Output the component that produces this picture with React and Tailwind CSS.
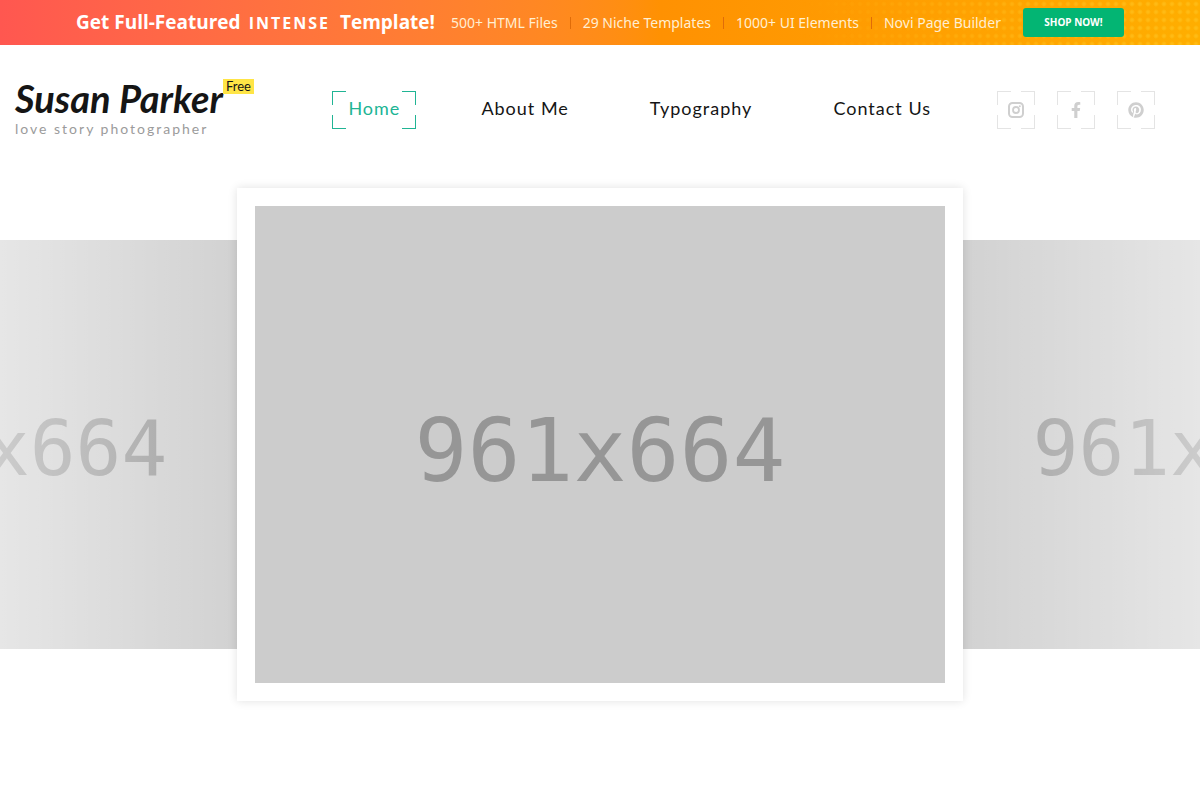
import { FaFacebookF, FaPinterest } from "react-icons/fa";

const features = ["500+ HTML Files", "29 Niche Templates", "1000+ UI Elements", "Novi Page Builder"];
const links = ["Home", "About Me", "Typography", "Contact Us"];

function InstagramIcon({ className }) {
  return (
    <svg viewBox="0 0 16 16" fill="none" stroke="currentColor" className={className} aria-hidden="true">
      <rect x="1" y="1" width="14" height="14" rx="3.5" strokeWidth="2" />
      <circle cx="8" cy="8" r="3" strokeWidth="1.8" />
      <circle cx="11.8" cy="4.2" r="1" fill="currentColor" stroke="none" />
    </svg>
  );
}

const socials = [
  { name: "Instagram", Icon: InstagramIcon },
  { name: "Facebook", Icon: FaFacebookF },
  { name: "Pinterest", Icon: FaPinterest },
];

function Corners() {
  return (
    <span aria-hidden="true" className="pointer-events-none absolute inset-0">
      <span className="absolute left-0 top-0 size-3.5 border-l border-t" />
      <span className="absolute right-0 top-0 size-3.5 border-r border-t" />
      <span className="absolute bottom-0 left-0 size-3.5 border-b border-l" />
      <span className="absolute bottom-0 right-0 size-3.5 border-b border-r" />
    </span>
  );
}

function Banner() {
  return (
    <aside className="relative flex h-[45px] items-center justify-center bg-linear-to-r from-[#ff5750] via-[#ff9102] via-55% to-[#ffae00] font-['Noto_Sans',sans-serif] whitespace-nowrap text-white">
      <span
        aria-hidden="true"
        className="absolute inset-y-0 right-0 w-1/3 bg-[radial-gradient(circle,#ffc928_1px,transparent_3px)] bg-size-[8px_8px] mask-l-from-20% opacity-50"
      />
      <div className="relative flex items-center">
        <strong className="flex items-baseline gap-2 font-['Open_Sans',sans-serif] text-[19px] font-bold leading-6">
          <span>Get Full-Featured</span>
          <span className="pr-0.5 text-base tracking-[2px]">INTENSE</span>
          <span>Template!</span>
        </strong>
        <ul className="ml-4 flex items-center text-sm text-[#ffefd2]">
          {features.map((f, i) => (
            <li key={f} className="flex items-center">
              {i > 0 && <span className="mx-3 h-3 w-px bg-[#e06c08]" />}
              {f}
            </li>
          ))}
        </ul>
        <a
          href="#shop"
          className="ml-[22px] flex h-[29px] w-[101px] items-center justify-center rounded-[3px] bg-[#03b573] text-[10px] font-bold text-white"
        >
          SHOP NOW!
        </a>
      </div>
    </aside>
  );
}

function Header() {
  return (
    <header className="flex items-start pt-[34px] pr-[45px] pl-[15px] whitespace-nowrap">
      <a href="#home" className="block text-[#151515]">
        <span className="flex items-start">
          <span className="font-['Lato',cursive] text-[38px] font-bold italic leading-[38px]">Susan Parker</span>
          <span className="bg-[#ffe546] px-[3px] font-['Lato',sans-serif] text-[13px] leading-[15px]">Free</span>
        </span>
        <span className="mt-0.5 block font-['Lato',sans-serif] text-sm leading-5 tracking-[2px] text-[#9b9b9b]">
          love story photographer
        </span>
      </a>
      <nav aria-label="Main" className="mt-3 ml-auto flex gap-[49px] font-['Lato',sans-serif] text-lg tracking-[1px]">
        {links.map((l, i) => (
          <a
            key={l}
            href={"#" + l.toLowerCase().replace(" ", "-")}
            className={
              "relative flex h-[38px] items-center px-4 pb-1 " + (i === 0 ? "text-[#20b494]" : "text-[#151515]")
            }
          >
            {l}
            {i === 0 && <Corners />}
          </a>
        ))}
      </nav>
      <ul className="mt-3 ml-[50px] flex gap-[22px]">
        {socials.map(({ name, Icon }) => (
          <li key={name}>
            <a
              href={"#" + name.toLowerCase()}
              aria-label={name}
              className="relative flex size-[38px] items-center justify-center text-[#e4e4e4]"
            >
              <Icon className="size-4 text-[#cfcfcf]" />
              <Corners />
            </a>
          </li>
        ))}
      </ul>
    </header>
  );
}

function Slide({ fade }) {
  return (
    <div className="relative flex h-[409px] w-[592px] shrink-0 items-center justify-center bg-[#ccc] pt-2 font-['DejaVu_Sans_Mono',monospace] text-[76px] text-[#969696]">
      961x664
      <span aria-hidden="true" className={"absolute inset-0 from-white to-transparent " + fade} />
    </div>
  );
}

export default function App() {
  return (
    <div className="min-h-screen overflow-x-hidden bg-white">
      <Banner />
      <Header />
      <main className="flex items-center justify-center overflow-hidden pt-[49px] pb-10">
        <Slide fade="bg-linear-to-r" />
        <div className="relative z-10 -mx-[66px] shrink-0 bg-white p-[18px] shadow-[0_0_9px_rgba(0,0,0,0.12)]">
          <div className="flex h-[477px] w-[690px] items-center justify-center bg-[#ccc] pt-3 font-['DejaVu_Sans_Mono',monospace] text-[88px] text-[#969696]">
            961x664
          </div>
        </div>
        <Slide fade="bg-linear-to-l" />
      </main>
    </div>
  );
}
